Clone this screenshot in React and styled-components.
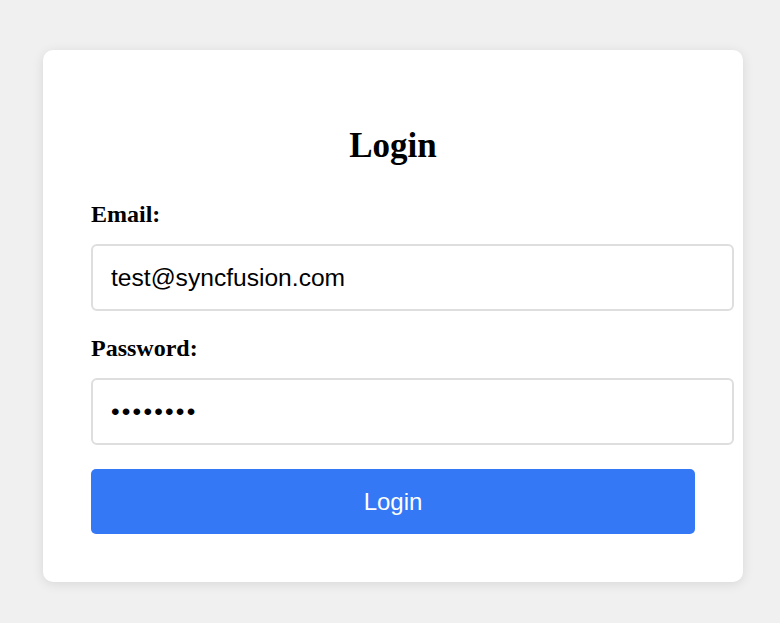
import React from 'react';
import styled, { createGlobalStyle } from 'styled-components';

const GlobalStyle = createGlobalStyle`
  html, body {
    margin: 0;
    padding: 0;
    background: #f0f0f0;
  }
  body {
    font-family: 'Liberation Serif', 'Times New Roman', serif;
    min-height: 623px;
  }
`;

const Page = styled.div`
  display: flex;
  align-items: flex-start;
  padding: 50px 37px 40px 43px;
`;

const Card = styled.div`
  width: 700px;
  box-sizing: border-box;
  padding: 48px;
  background: #ffffff;
  border-radius: 10px;
  box-shadow: 0 2px 12px rgba(0, 0, 0, 0.1);
`;

const Title = styled.h2`
  margin: 28px 0 35px;
  font-size: 35px;
  font-weight: bold;
  text-align: center;
  color: #000;
`;

const Field = styled.div`
  margin-bottom: 24px;
`;

const Label = styled.label`
  display: block;
  margin-bottom: 16px;
  font-size: 24px;
  font-weight: bold;
  color: #000;
`;

const Input = styled.input`
  display: block;
  width: 100%;
  height: 27px;
  padding: 18px 17px 18px 18px;
  border: 2px solid #dedede;
  border-radius: 6px;
  background: #fff;
  font-family: 'Liberation Sans', Arial, sans-serif;
  font-size: 24.6px;
  color: #000;
  letter-spacing: ${({ type }) => (type === 'password' ? '2.2px' : 'normal')};
  outline: none;
`;

const Button = styled.button`
  display: block;
  width: 100%;
  height: 65px;
  border: none;
  border-radius: 5px;
  background: #3478f6;
  color: #fff;
  font-family: 'Liberation Sans', Arial, sans-serif;
  font-size: 24px;
  cursor: pointer;

  &:hover {
    background: #2a6ce8;
  }
`;

export default function App() {
  return (
    <>
      <GlobalStyle />
      <Page>
        <Card>
          <Title>Login</Title>
          <form onSubmit={(e) => e.preventDefault()}>
            <Field>
              <Label htmlFor="email">Email:</Label>
              <Input id="email" type="email" defaultValue="test@syncfusion.com" />
            </Field>
            <Field>
              <Label htmlFor="password">Password:</Label>
              <Input id="password" type="password" defaultValue="password" />
            </Field>
            <Button type="submit">Login</Button>
          </form>
        </Card>
      </Page>
    </>
  );
}
